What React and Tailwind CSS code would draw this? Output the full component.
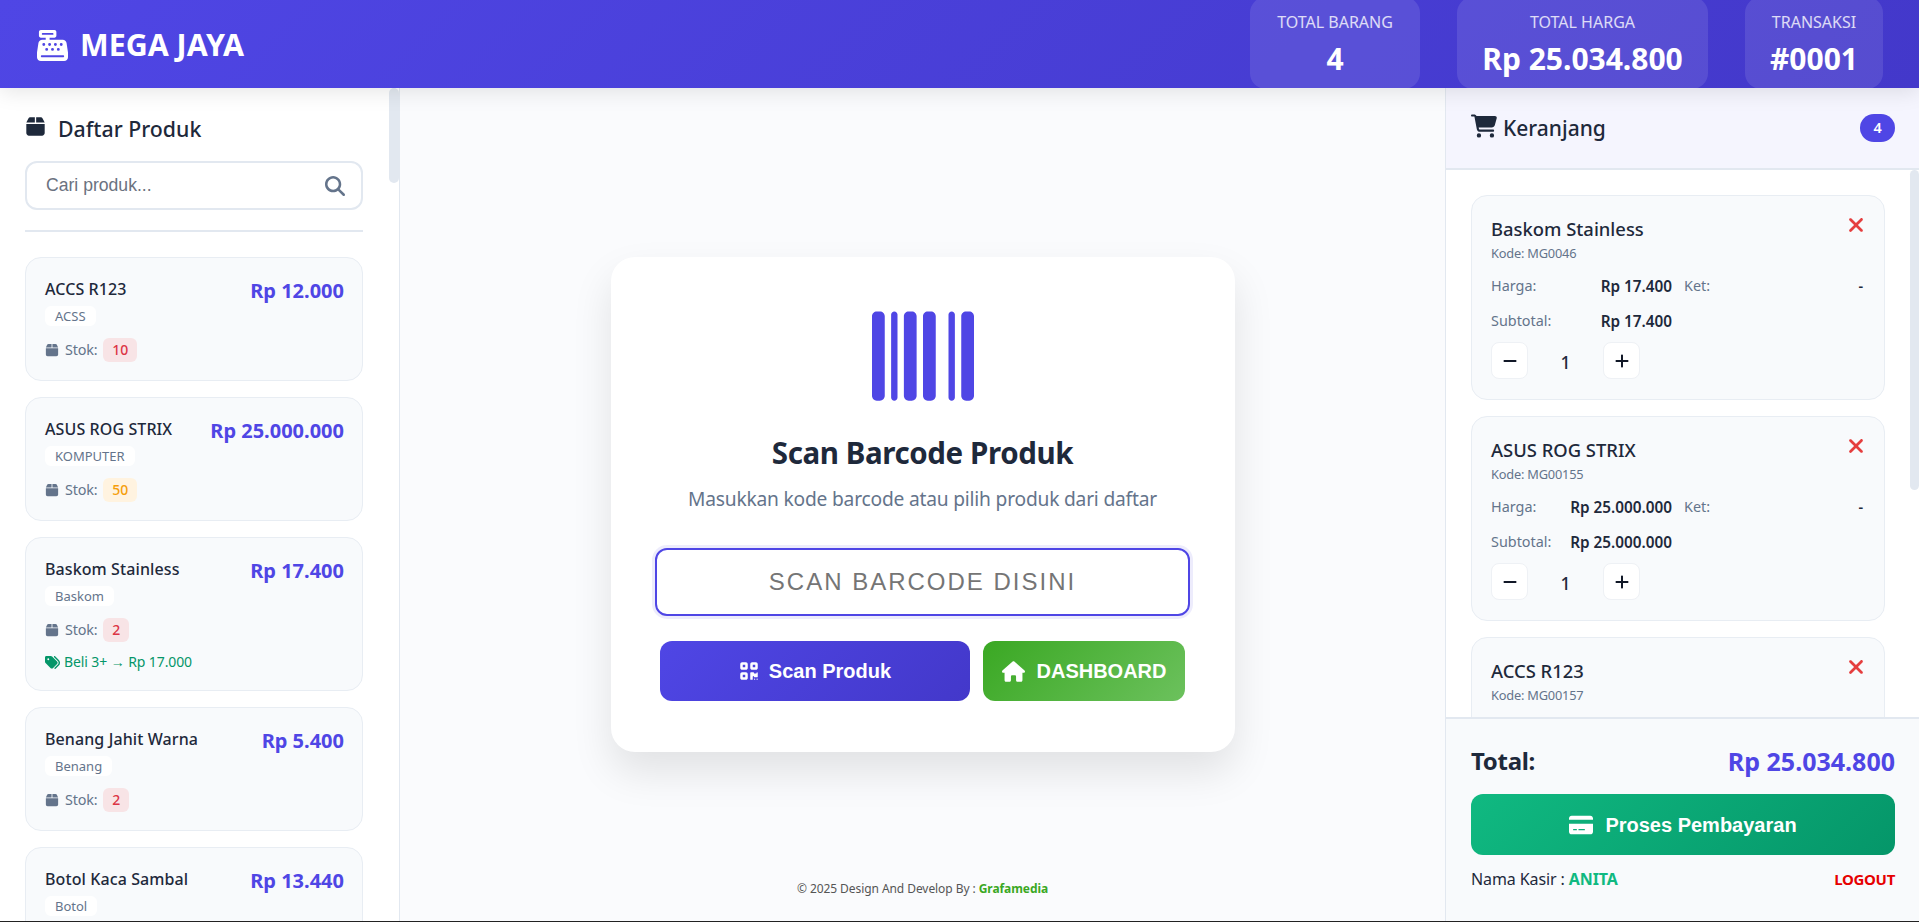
import React from 'react';
import {
    FaBarcode, FaBox, FaCartShopping, FaCashRegister, FaCreditCard, FaHouse,
    FaMagnifyingGlass, FaMinus, FaPlus, FaQrcode, FaTags, FaXmark,
} from 'react-icons/fa6';

const products = [
    { name: 'ACCS R123', price: 'Rp 12.000', category: 'ACSS', stock: 10, low: true },
    { name: 'ASUS ROG STRIX', price: 'Rp 25.000.000', category: 'KOMPUTER', stock: 50, low: false },
    { name: 'Baskom Stainless', price: 'Rp 17.400', category: 'Baskom', stock: 2, low: true, promo: 'Beli 3+ → Rp 17.000' },
    { name: 'Benang Jahit Warna', price: 'Rp 5.400', category: 'Benang', stock: 2, low: true },
    { name: 'Botol Kaca Sambal', price: 'Rp 13.440', category: 'Botol', stock: 8, low: true },
];

const cartItems = [
    { name: 'Baskom Stainless', code: 'MG0046', price: 'Rp 17.400', subtotal: 'Rp 17.400' },
    { name: 'ASUS ROG STRIX', code: 'MG00155', price: 'Rp 25.000.000', subtotal: 'Rp 25.000.000' },
    { name: 'ACCS R123', code: 'MG00157', price: 'Rp 12.000', subtotal: 'Rp 12.000' },
];

const StatCard = ({ label, value, width }) => (
    <div className={`${width} h-[92px] self-end -mb-px shrink-0 rounded-2xl bg-white/10 flex flex-col items-center pt-[15px]`}>
        <div className="text-[16px] leading-[20px] uppercase text-white/80">{label}</div>
        <div className="mt-[7px] text-[30px] leading-[40px] font-bold text-white">{value}</div>
    </div>
);

const ProductCard = ({ product }) => (
    <div className="shrink-0 rounded-2xl border border-[#e8edf3] bg-[#f8fafc] pl-[19px] pr-[18px] pt-[19px] pb-[18px]">
        <div className="flex justify-between items-start">
            <div>
                <div className="text-[16px] leading-[24px] font-medium text-[#1e293b] tracking-[0.1px]">{product.name}</div>
                <span className="inline-block mt-[5px] rounded-md bg-white px-[10px] text-[13px] leading-[20px] text-[#64748b]">
                    {product.category}
                </span>
            </div>
            <div className="mt-[2px] text-[20px] leading-[24px] font-bold text-[#4f46e5]">{product.price}</div>
        </div>
        <div className="mt-[11px] flex items-center text-[14.4px] leading-[24px] text-[#64748b]">
            <FaBox size={14} className="mr-[6px]" />
            <span className="tracking-[-0.2px]">Stok:</span>
            <span className={`ml-[6px] rounded-md px-[9px] text-[14px] leading-[24px] font-medium ${product.low ? 'bg-[#f8e4e6] text-[#dc3545]' : 'bg-[#fff3e0] text-[#f59e0b]'}`}>
                {product.stock}
            </span>
        </div>
        {product.promo && (
            <div className="mt-[10px] flex items-center text-[14px] leading-[20px] text-[#059669] tracking-[-0.1px]">
                <FaTags size={15} className="mr-[4px]" />
                {product.promo}
            </div>
        )}
    </div>
);

const CartItem = ({ item }) => (
    <div className="shrink-0 h-[205px] rounded-2xl border border-[#e8edf3] bg-[#f8fafc] px-[19px] pt-[19px]">
        <div className="flex justify-between items-start">
            <div>
                <div className="text-[18.4px] leading-[28px] font-medium text-[#1e293b]">{item.name}</div>
                <div className="text-[12.8px] leading-[20px] text-[#64748b] tracking-[-0.2px]">Kode: {item.code}</div>
            </div>
            <FaXmark size={22} className="text-[#e53e3e] -mr-[2px] -mt-[1px]" />
        </div>
        <div className="mt-[12px] grid grid-cols-[181px_179px] gap-x-[12px] gap-y-[13px] text-[14.4px] leading-[22px]">
            <div className="flex justify-between">
                <span className="text-[#64748b]">Harga:</span>
                <span className="text-[15.3px] font-semibold text-[#1e293b]">{item.price}</span>
            </div>
            <div className="flex justify-between">
                <span className="text-[#64748b]">Ket:</span>
                <span className="font-semibold text-[#1e293b]">-</span>
            </div>
            <div className="flex justify-between">
                <span className="text-[#64748b]">Subtotal:</span>
                <span className="text-[15.3px] font-semibold text-[#1e293b]">{item.subtotal}</span>
            </div>
        </div>
        <div className="mt-[10px] flex items-center">
            <div className="w-[37px] h-[37px] rounded-lg bg-white border border-[#eef1f5] flex items-center justify-center text-[#111827]">
                <FaMinus size={16} />
            </div>
            <div className="w-[75px] text-center text-[17.6px] font-medium text-[#1e293b] pt-[3px]">1</div>
            <div className="w-[37px] h-[37px] rounded-lg bg-white border border-[#eef1f5] flex items-center justify-center text-[#111827]">
                <FaPlus size={16} />
            </div>
        </div>
    </div>
);

export default function App() {
    return (
        <div className="h-[922px] overflow-hidden flex flex-col bg-[#fafbfd] font-['Noto_Sans',sans-serif]">
            <header className="relative z-10 h-[88px] shrink-0 flex items-center justify-between pl-[37px] pr-[36px] bg-[linear-gradient(135deg,#4f46e5,#4338ca)] shadow-[0_4px_20px_rgba(0,0,0,0.1)]">
                <div className="mt-[2px] flex items-center text-white">
                    <FaCashRegister size={31} />
                    <span className="ml-[12px] text-[30.4px] leading-[40px] font-bold">MEGA JAYA</span>
                </div>
                <div className="self-end flex gap-[37px]">
                    <StatCard label="Total Barang" value="4" width="w-[170px]" />
                    <StatCard label="Total Harga" value="Rp 25.034.800" width="w-[251px]" />
                    <StatCard label="Transaksi" value="#0001" width="w-[138px]" />
                </div>
            </header>

            <main className="flex-1 min-h-0 flex">
                <aside className="relative w-[400px] shrink-0 bg-white border-r border-[#e2e8f0] pl-[25px] pr-[36px] overflow-hidden">
                    <div className="absolute right-0 top-0 w-[10px] h-[95px] rounded-full bg-[#e2e8f0]" />
                    <div className="pt-[26px] flex items-center text-[#1e293b]">
                        <FaBox size={21} className="mb-[6px]" />
                        <h2 className="ml-[12px] text-[21.3px] leading-[30px] font-medium">Daftar Produk</h2>
                    </div>
                    <div className="mt-[17px] h-[49px] rounded-xl border-2 border-[#e2e8f0] bg-white flex items-center justify-between pl-[19px] pr-[16px]">
                        <span className="font-['Liberation_Sans',sans-serif] text-[17.6px] text-[#6b7280]">Cari produk...</span>
                        <FaMagnifyingGlass size={20} className="text-[#64748b]" />
                    </div>
                    <div className="mt-[20px] h-[2px] bg-[#e2e8f0]" />
                    <div className="mt-[25px] flex flex-col gap-[16px]">
                        {products.map((product) => (
                            <ProductCard key={product.name} product={product} />
                        ))}
                    </div>
                </aside>

                <section className="flex-1 min-w-0 relative flex flex-col items-center">
                    <div className="mt-[169px] w-[624px] h-[495px] rounded-3xl bg-white shadow-[0_20px_40px_rgba(0,0,0,0.1)] flex flex-col items-center pt-[48px]">
                        <FaBarcode size={102} className="text-[#4f46e5] h-[102px]" />
                        <h1 className="mt-[24px] text-[29.5px] leading-[44px] font-bold text-[#1e293b] tracking-[-0.4px]">Scan Barcode Produk</h1>
                        <p className="mt-[10px] text-[19.2px] leading-[28px] text-[#64748b] tracking-[-0.2px]">
                            Masukkan kode barcode atau pilih produk dari daftar
                        </p>
                        <div className="mt-[35px] w-[535px] h-[68px] rounded-xl border-2 border-[#4f46e5] bg-white shadow-[0_0_0_3px_rgba(79,70,229,0.1)] flex items-center justify-center font-['Liberation_Sans',sans-serif] text-[24px] tracking-[2px] text-[#757575]">
                            SCAN BARCODE DISINI
                        </div>
                        <div className="mt-[25px] w-[525px] flex gap-[13px] font-['Liberation_Sans',sans-serif] text-[20px] font-bold text-white">
                            <div className="flex-1 h-[60px] rounded-xl bg-[linear-gradient(135deg,#4f46e5,#4338ca)] flex items-center justify-center gap-[10px]">
                                <FaQrcode size={20} />
                                Scan Produk
                            </div>
                            <div className="w-[202px] h-[60px] rounded-xl bg-[linear-gradient(135deg,#3aa823,#6cc15d)] flex items-center justify-center gap-[12px]">
                                <FaHouse size={23} />
                                DASHBOARD
                            </div>
                        </div>
                    </div>
                    <div className="absolute bottom-[23px] left-0 right-0 text-center text-[12px] leading-[18px] text-[#555] tracking-[-0.07px]">
                        © 2025 Design And Develop By : <span className="font-bold text-[#3aa823]">Grafamedia</span>
                    </div>
                </section>

                <aside className="w-[474px] shrink-0 bg-white border-l border-[#e2e8f0] flex flex-col">
                    <div className="h-[82px] shrink-0 bg-[#f5f5fe] border-b-2 border-[#e2e8f0] flex items-center justify-between pl-[25px] pr-[24px]">
                        <div className="flex items-center text-[#1e293b]">
                            <FaCartShopping size={26} className="mb-[4px]" />
                            <h2 className="ml-[6px] text-[21px] leading-[30px] font-medium">Keranjang</h2>
                        </div>
                        <span className="w-[35px] h-[28px] rounded-full bg-[#4f46e5] text-white text-[14.4px] font-semibold flex items-center justify-center">4</span>
                    </div>
                    <div className="relative flex-1 min-h-0 overflow-hidden pt-[25px] pl-[25px] pr-[34px] flex flex-col gap-[16px]">
                        <div className="absolute right-0 top-0 w-[9px] h-[320px] rounded-full bg-[#e2e8f0]" />
                        {cartItems.map((item) => (
                            <CartItem key={item.code} item={item} />
                        ))}
                    </div>
                    <div className="h-[204px] shrink-0 bg-[#f8fafc] border-t-2 border-[#e2e8f0] pl-[25px] pr-[24px] pt-[24px]">
                        <div className="flex justify-between items-center text-[24px] leading-[36px] font-bold">
                            <span className="text-[#1e293b] tracking-[-0.3px]">Total:</span>
                            <span className="text-[25px] text-[#4f46e5]">Rp 25.034.800</span>
                        </div>
                        <div className="mt-[15px] h-[61px] rounded-xl bg-[linear-gradient(135deg,#10b981,#059669)] flex items-center justify-center gap-[12px] font-['Liberation_Sans',sans-serif] text-[20px] font-bold text-white">
                            <FaCreditCard size={24} />
                            Proses Pembayaran
                        </div>
                        <div className="mt-[12px] flex justify-between items-center">
                            <span className="text-[16px] leading-[24px] text-[#1e293b] tracking-[-0.1px]">
                                Nama Kasir : <span className="font-bold text-[#10b981]">ANITA</span>
                            </span>
                            <span className="text-[15px] font-bold text-[#e60000] tracking-[-0.3px]">LOGOUT</span>
                        </div>
                    </div>
                </aside>
            </main>
            <div className="h-px shrink-0 bg-[#222]" />
        </div>
    );
}
